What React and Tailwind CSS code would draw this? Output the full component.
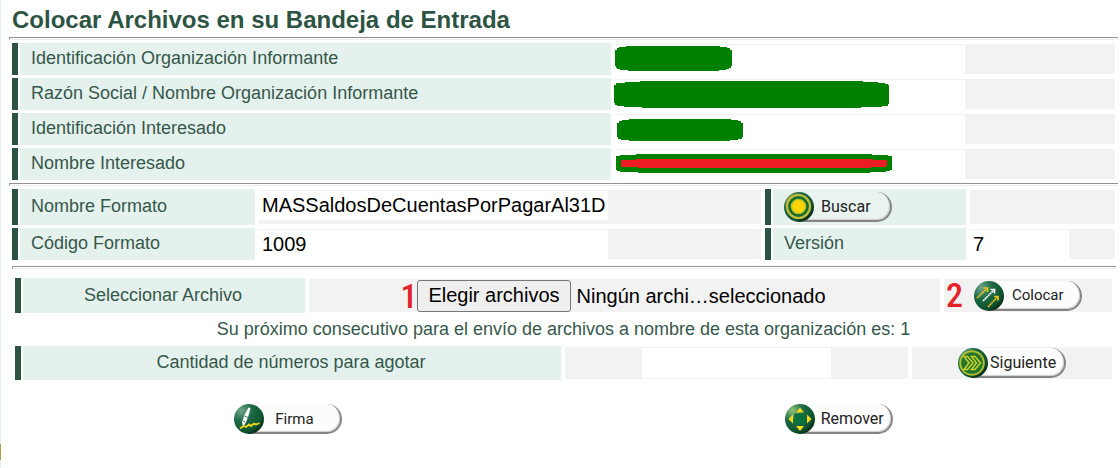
import { useRef } from "react";

function Label({ htmlFor, center, children }) {
  return (
    <div className="flex gap-0.5">
      <span className="w-1.5 shrink-0 bg-[#2d5443]" />
      <div
        className={
          "flex min-w-0 flex-1 items-center bg-[#e5f1ed] pb-0.5 text-[18px] leading-5 whitespace-nowrap text-[#35584a] " +
          (center ? "justify-center pr-0.5" : "pl-[11px]")
        }
      >
        {htmlFor ? <label htmlFor={htmlFor}>{children}</label> : children}
      </div>
    </div>
  );
}

function Rule() {
  return <hr className="h-[3px] border-0 border-t border-b border-l border-t-[#929292] border-b-[#ececec] border-l-[#929292]" />;
}

function Redacted({ id, shape }) {
  return (
    <div className="relative my-px flex bg-[#f2f2f2]">
      <input id={id} readOnly className="mt-px w-[70%] bg-white outline-none" />
      {shape}
    </div>
  );
}

function Pill({ icon, children, body = "bg-[#fcfcfc]", label }) {
  return (
    <button type="button" className="flex h-[30px] w-[108px] shrink-0 text-left">
      <span className="relative z-10 h-[30px] w-[30px] shrink-0">{icon}</span>
      <span
        className={
          "-ml-4 h-[30px] flex-1 rounded-r-full border-r-2 border-b-2 border-[#858585] font-['Roboto',sans-serif] whitespace-nowrap text-[#222] shadow-[inset_-1px_-1px_1px_#d0d0d0] " +
          body + " " + label
        }
      >
        {children}
      </span>
    </button>
  );
}

function Orb({ id, light = "#6fa58a", children }) {
  return (
    <svg viewBox="0 0 30 30" className="block h-[30px] w-[30px]" aria-hidden="true">
      <defs>
        <radialGradient id={id} cx="0.25" cy="0.22" r="0.9">
          <stop offset="0" stopColor={light} />
          <stop offset="0.4" stopColor="#1d6b45" />
          <stop offset="0.8" stopColor="#0f5230" />
          <stop offset="1" stopColor="#04200e" />
        </radialGradient>
      </defs>
      <circle cx="15" cy="15" r="15" fill={`url(#${id})`} />
      {children}
    </svg>
  );
}

const searchIcon = (
  <Orb id="orb-search" light="#8fa650">
    <circle cx="14.5" cy="14.5" r="11.5" fill="#146b2a" stroke="#c2ba3c" strokeWidth="2.2" />
    <circle cx="14.5" cy="14.5" r="7" fill="#ffd500" stroke="#b9c42d" strokeWidth="1.6" />
  </Orb>
);

const placeIcon = (
  <Orb id="orb-place">
    <g fill="none" strokeWidth="1.7">
      <g stroke="#e8c51c">
        <path d="M3 17L13 7.500" strokeDasharray="1.9 0.5" />
        <path d="M9.500 7H13.500V11" />
        <path d="M14 26L23.500 16" strokeDasharray="1.9 0.5" />
        <path d="M20 15.500H24V19.500" />
      </g>
      <g stroke="#fff">
        <path d="M9 20L20 9" strokeDasharray="1.9 0.5" />
        <path d="M16.500 8.500H20.500V12.500" />
      </g>
    </g>
  </Orb>
);

const nextIcon = (
  <Orb id="orb-next">
    <circle cx="14" cy="15" r="11.800" fill="#23752c" stroke="#b0bd2e" strokeWidth="2" />
    <path d="M6 8.500H9.500L15 15L9.500 21.500H6L11 15ZM13.500 8.500H17L22.500 15L17 21.500H13.500L18.500 15Z" fill="#23752c" stroke="#c8d02c" strokeWidth="1.500" />
  </Orb>
);

const signIcon = (
  <Orb id="orb-sign">
    <path d="M14.500 3.500L16.500 4L15 10L12.500 17L10.500 21L9 23L8 18L10.500 11Z" fill="#fff" />
    <path d="M10.500 12L14 13.500M9 17L11 18" stroke="#17613b" strokeWidth="0.800" />
    <path d="M6 24.500L9.500 22L12 23L15 20.500L17 22L20 19.500L22 20.500L25.500 19" fill="none" stroke="#f0d21c" strokeWidth="1.800" />
  </Orb>
);

const removeIcon = (
  <Orb id="orb-remove" light="#8fc27a">
    <rect x="9.500" y="9.500" width="11" height="11" fill="#0b7040" />
    <path d="M15 3.500L19 8.500H11ZM15 27L11 22H19ZM3.500 15L8 10.500V19.500ZM26.500 15L22 19.500V10.500Z" fill="#f3d91c" />
  </Orb>
);

const blot = "pointer-events-none absolute";
const stepMark =
  "absolute font-['Roboto_Condensed','Open_Sans_Condensed','Roboto',sans-serif] text-[34px] leading-8 font-medium text-[#e3222a]";

export default function App() {
  const fileRef = useRef(null);
  return (
    <form
      onSubmit={(e) => e.preventDefault()}
      className="relative min-h-screen border-l border-[#e6efef] bg-white font-['Liberation_Sans',Arial,sans-serif]"
    >
      <h1 className="h-[37px] pt-1.5 pl-[11px] text-[24px] leading-7 font-bold text-[#2d5443]">
        Colocar Archivos en su Bandeja de Entrada
      </h1>

      <div className="pr-0.5 pl-2">
        <Rule />
      </div>
      <section className="grid auto-rows-[32px] grid-cols-[599fr_500fr] gap-x-1 gap-y-[3px] py-[3px] pr-[5px] pl-[11px]">
        <Label htmlFor="org-id">Identificación Organización Informante</Label>
        <Redacted
          id="org-id"
          shape={
            <svg className={blot + " top-0.5 left-0 h-[25px] w-[117px]"} viewBox="0 0 117 25" shapeRendering="crispEdges" aria-hidden="true">
              <path d="M11 0H105V1H112V2H115V4H117V20H116V22H114V23H111V24H104V25H13V24H5V23H2V22H1V20H0V4H2V2H4V1H11Z" fill="#008000" />
            </svg>
          }
        />
        <Label htmlFor="org-name">Razón Social / Nombre Organización Informante</Label>
        <Redacted
          id="org-name"
          shape={
            <svg className={blot + " top-0.5 -left-px h-[27px] w-[275px]"} viewBox="0 0 275 27" shapeRendering="crispEdges" aria-hidden="true">
              <path d="M26 0H249V1H264V2H271V3H274V4H275V23H274V25H268V26H247V27H28V26H10V25H3V24H1V22H0V4H2V2H11V1H26Z" fill="#008000" />
            </svg>
          }
        />
        <Label htmlFor="person-id">Identificación Interesado</Label>
        <Redacted
          id="person-id"
          shape={
            <svg className={blot + " top-[5px] left-0.5 h-[22px] w-[126px]"} viewBox="0 0 126 22" shapeRendering="crispEdges" aria-hidden="true">
              <path d="M12 0H114V1H121V2H124V4H126V18H125V20H121V21H113V22H12V21H4V20H1V18H0V4H2V2H5V1H12Z" fill="#008000" />
            </svg>
          }
        />
        <Label htmlFor="person-name">Nombre Interesado</Label>
        <Redacted
          id="person-name"
          shape={
            <svg className={blot + " top-[5px] left-px h-[19px] w-[276px]"} viewBox="0 0 276 19" shapeRendering="crispEdges" aria-hidden="true">
              <path d="M20 0H256V1H272V2H276V16H274V17H270V18H254V19H22V18H4V17H1V16H0V2H4V1H20Z" fill="#008000" />
              <path d="M19 5H257V6H271V12H270V13H255V14H22V13H5V6H19Z" fill="#ed1c24" />
            </svg>
          }
        />
      </section>

      <div className="pr-0.5 pl-2">
        <Rule />
      </div>
      <section className="grid grid-cols-[243fr_502fr_201fr_145fr] grid-rows-[36px_32px] gap-x-1 gap-y-[3px] pt-[3px] pr-[5px] pb-1.5 pl-[11px]">
        <Label htmlFor="format-name">Nombre Formato</Label>
        <div className="my-px flex bg-[#f2f2f2] pt-px pb-1">
          <input id="format-name" defaultValue="MASSaldosDeCuentasPorPagarAl31D" className="w-[69.5%] bg-white px-[3px] pb-0.5 text-[20px] text-black outline-none" />
        </div>
        <div className="flex gap-0.5">
          <span className="w-1.5 shrink-0 bg-[#2d5443]" />
          <div className="flex flex-1 items-center bg-[#e5f1ed] pl-[11px]">
            <Pill icon={searchIcon} body="bg-[#e9f3ef]" label="pl-[23px] text-[16px] leading-[30px]">Buscar</Pill>
          </div>
        </div>
        <div className="my-px bg-[#f2f2f2]" />
        <Label htmlFor="format-code">Código Formato</Label>
        <div className="my-px flex bg-[#f2f2f2] pt-px">
          <input id="format-code" defaultValue="1009" className="w-[69.5%] bg-white px-[3px] pb-0.5 text-[20px] text-black outline-none" />
        </div>
        <Label htmlFor="version">Versión</Label>
        <div className="my-px flex bg-[#f2f2f2] pt-px">
          <input id="version" defaultValue="7" className="w-[68%] bg-white px-[3px] pb-0.5 text-[20px] text-black outline-none" />
        </div>
      </section>

      <div className="pr-1 pl-[11px]">
        <Rule />
      </div>
      <section className="pt-[9px] pr-2 pl-3.5">
        <div className="grid h-[35px] grid-cols-[290fr_631fr_168fr] gap-x-1">
          <Label htmlFor="file" center>Seleccionar Archivo</Label>
          <div className="my-px flex items-center justify-center bg-[#f2f2f2] pr-1.5">
            <div className="relative flex items-center gap-1.5 text-[20px] text-black">
              <span className={stepMark + " top-0 right-full"}>1</span>
              <input ref={fileRef} id="file" type="file" multiple className="hidden" />
              <button
                type="button"
                onClick={() => fileRef.current.click()}
                className="h-8 rounded-[3px] border border-[#767676] bg-[#efefef] px-2.5 pb-0.5 leading-7 whitespace-nowrap"
              >
                Elegir archivos
              </button>
              <span className="whitespace-nowrap">Ningún archi…seleccionado</span>
            </div>
          </div>
          <div className="relative my-px flex items-center bg-[#f2f2f2] pl-[30px]">
            <span className={stepMark + " top-0 left-0.5"}>2</span>
            <Pill icon={placeIcon} label="pl-6 text-[15px] leading-7">Colocar</Pill>
          </div>
        </div>
        <p className="h-[33px] pt-1.5 text-center text-[18px] leading-5 text-[#35584a]">
          Su próximo consecutivo para el envío de archivos a nombre de esta organización es: 1
        </p>
        <div className="grid h-[33px] grid-cols-[546fr_343fr_200fr] gap-x-1">
          <Label htmlFor="amount" center>Cantidad de números para agotar</Label>
          <div className="my-px flex justify-center bg-[#f2f2f2] py-px">
            <input id="amount" className="w-[55%] bg-white px-[3px] text-[20px] text-black outline-none" />
          </div>
          <div className="my-px flex items-center justify-center bg-[#f2f2f2]">
            <Pill icon={nextIcon} label="pl-[18px] text-[16px] leading-[30px]">Siguiente</Pill>
          </div>
        </div>
        <div className="grid grid-cols-2 pt-[25px]">
          <div className="flex justify-center pr-0.5">
            <Pill icon={signIcon} label="pl-[27px] text-[15px] leading-[30px]">Firma</Pill>
          </div>
          <div className="flex justify-center pl-0.5">
            <Pill icon={removeIcon} label="pl-[22px] text-[16px] leading-[30px]">Remover</Pill>
          </div>
        </div>
      </section>
      <span className="absolute bottom-2 -left-px h-4 w-px bg-[#b89a45]" />
    </form>
  );
}
